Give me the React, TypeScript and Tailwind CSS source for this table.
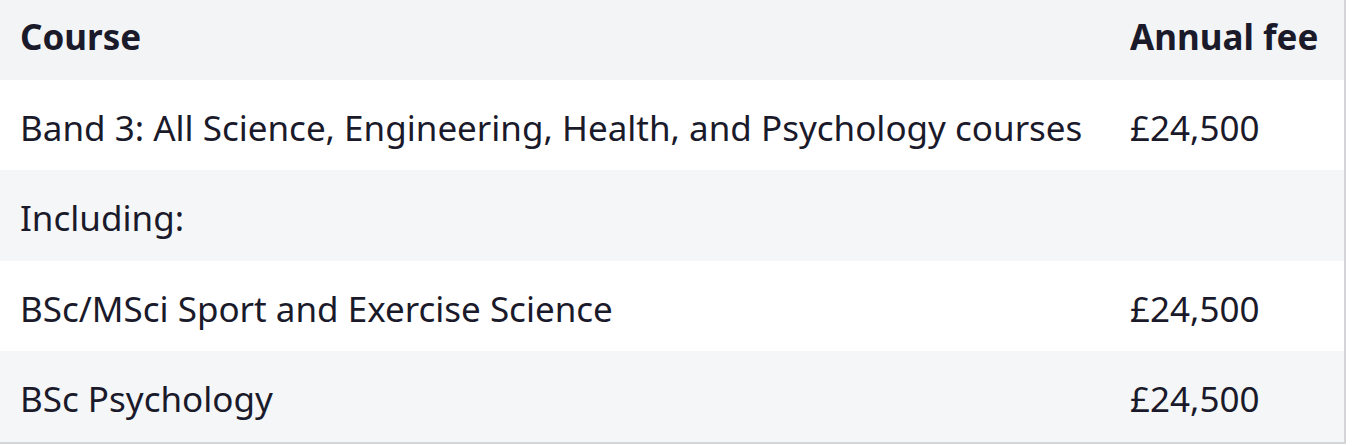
import React from "react";

const rows = [
  { course: "Band 3: All Science, Engineering, Health, and Psychology courses", fee: "£24,500" },
  { course: "Including:", fee: "" },
  { course: "BSc/MSci Sport and Exercise Science", fee: "£24,500" },
  { course: "BSc Psychology", fee: "£24,500" },
];

export default function App() {
  return (
    <div className="h-[446px] w-[1360px] bg-white" style={{ fontFamily: '"Noto Sans", "Open Sans", sans-serif' }}>
      <div className="w-[1346px] border-r-2 border-b-2 border-[#d4d5d9]">
        <table className="w-full border-collapse text-[35px] leading-none text-[#1a1a2b]">
          <thead>
            <tr className="h-[80px] bg-[#f3f4f6]">
              <th className="pb-2 pl-5 text-left font-bold">Course</th>
              <th className="w-[214px] pb-2 text-left font-bold">Annual fee</th>
            </tr>
          </thead>
          <tbody>
            {rows.map((r, i) => (
              <tr key={i} className={i % 2 === 0 ? "h-[90px] bg-white" : "h-[91px] bg-[#f5f6f8]"}>
                <td className="pt-1 pl-5 text-left">{r.course}</td>
                <td className="pt-1 text-left">{r.fee}</td>
              </tr>
            ))}
          </tbody>
        </table>
      </div>
    </div>
  );
}
